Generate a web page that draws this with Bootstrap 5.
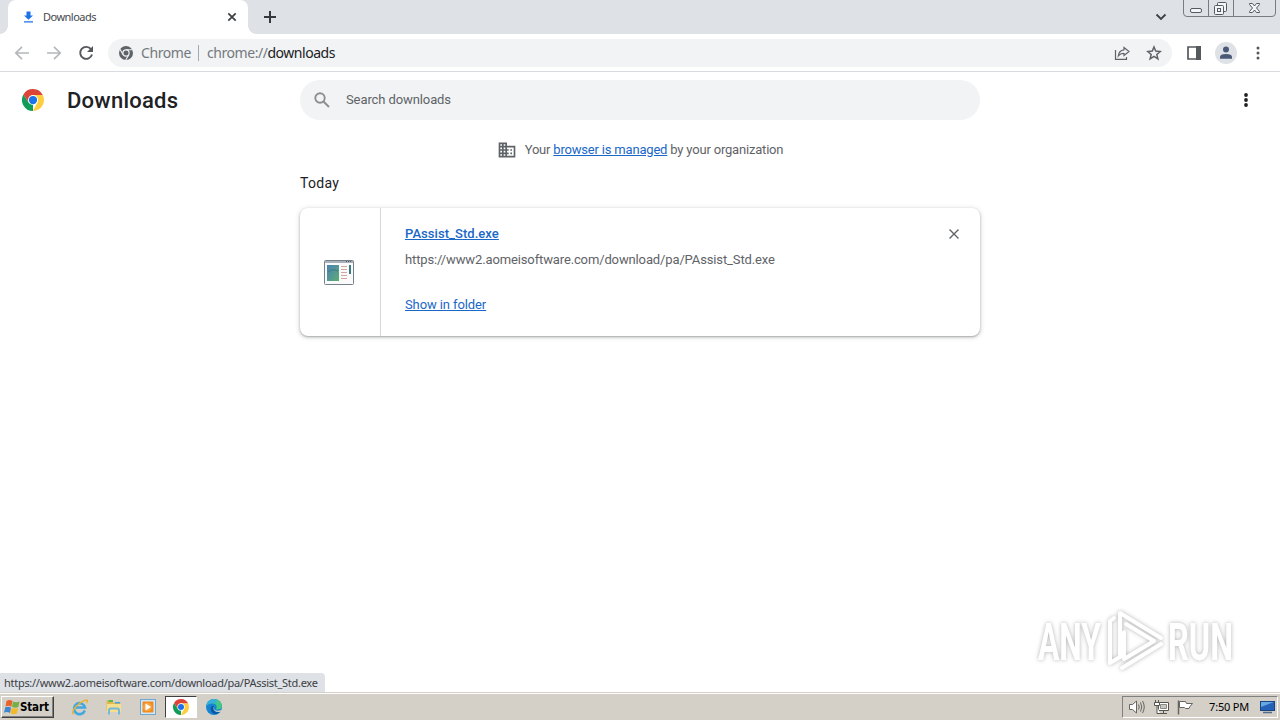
<!DOCTYPE html>
<html lang="en">

    <head>
        <meta charset="UTF-8">
        <meta name="viewport" content="width=device-width, initial-scale=1.0">
        <title>Downloads</title>
        <link href="https://cdn.jsdelivr.net/npm/bootstrap@5.3.2/dist/css/bootstrap.min.css" rel="stylesheet">
        <script src="https://cdn.jsdelivr.net/npm/bootstrap@5.3.2/dist/js/bootstrap.bundle.min.js"></script>
        <style>
            body {
                font-family: Roboto, 'Liberation Sans', sans-serif;
                font-size: 13px;
                line-height: 20px;
                color: #5f6368;
                background: #fff;
            }

            svg {
                display: block;
                flex: none;
            }

            /* tab strip */
            .tab-strip {
                height: 34px;
                background: #dee1e6;
                padding-left: 8px;
            }

            .page-tab {
                width: 240px;
                height: 34px;
                padding: 0 10px 0 14px;
                background: #fff;
                border-radius: 8px 8px 0 0;
                color: #45494d;
                font: 11px/34px 'Noto Sans', sans-serif;
            }

            .page-tab::before,
            .page-tab::after {
                content: "";
                position: absolute;
                bottom: 0;
                width: 8px;
                height: 8px;
            }

            .page-tab::before {
                left: -8px;
                background: radial-gradient(circle at 0 0, transparent 7.5px, #fff 8px);
            }

            .page-tab::after {
                right: -8px;
                background: radial-gradient(circle at 100% 0, transparent 7.5px, #fff 8px);
            }

            .tab-name {
                margin-left: 8px;
                letter-spacing: -0.52px;
            }

            .tab-plus {
                margin-left: 15px;
            }

            .tab-arrow {
                margin-right: 16px;
            }

            .window-keys {
                margin-right: 4px;
            }

            /* toolbar */
            .toolbar {
                height: 38px;
                border-bottom: 1px solid #d9dbde;
                padding: 0 15px 0 14px;
            }

            .omnibox {
                width: 1064px;
                height: 28px;
                margin-left: 14px;
                padding: 0 10px;
                border-radius: 14px;
                background: #f1f3f4;
                font: 14px/28px 'Noto Sans', sans-serif;
                color: #75797e;
            }

            .omni-chip {
                margin-left: 7px;
                letter-spacing: -0.4px;
            }

            .omni-bar {
                width: 1px;
                height: 16px;
                margin: 0 8px 0 7px;
                background: #a5a8ac;
            }

            .omni-url {
                letter-spacing: -0.46px;
            }

            .omni-url span {
                color: #202124;
            }

            .avatar-pic {
                margin: 0 14px;
            }

            /* page */
            .page-area {
                height: 620px;
            }

            .page-head {
                height: 56px;
                padding-left: 21px;
            }

            .page-name {
                width: 233px;
                margin: 2px 0 0 22px;
                font-size: 22px;
                font-weight: 500;
                line-height: 28px;
                letter-spacing: 0.25px;
                color: #202124;
            }

            .search-box {
                width: 680px;
                height: 40px;
                padding-left: 12px;
                border-radius: 20px;
                background: #f1f3f4;
            }

            .search-box span {
                margin-left: 14px;
                letter-spacing: -0.1px;
            }

            .head-dots {
                margin-right: 24px;
            }

            .list-area {
                width: 680px;
            }

            .managed-row {
                height: 44px;
                letter-spacing: -0.19px;
            }

            .managed-row span {
                margin-left: 8px;
            }

            a {
                color: #1a67c8;
            }

            .day-label {
                padding-top: 1px;
                font-size: 14px;
                letter-spacing: 0.3px;
                color: #202124;
                margin-bottom: 15px;
            }

            .file-card {
                height: 128px;
                border-radius: 8px;
                box-shadow: 0 1px 2px rgba(60, 64, 67, .35), 0 1px 4px 1px rgba(60, 64, 67, .18);
            }

            .file-pic {
                width: 81px;
                padding-right: 2px;
                border-right: 1px solid #d8d8d8;
            }

            .file-info {
                padding: 16px 0 0 24px;
            }

            .file-name {
                font-weight: 500;
                letter-spacing: 0.06px;
            }

            .file-url {
                margin-top: 6px;
                letter-spacing: -0.13px;
            }

            .file-show {
                margin-top: 25px;
                letter-spacing: -0.1px;
            }

            .file-close {
                margin: 21px 21px 0 0;
            }

            .status-tip {
                left: 0;
                bottom: 0;
                width: 325px;
                height: 19px;
                padding-left: 4px;
                border-radius: 0 4px 0 0;
                background: #dee1e6;
                color: #3c4043;
                font: 11px/20px 'Noto Sans', sans-serif;
                letter-spacing: -0.28px;
                white-space: nowrap;
            }

            .watermark {
                right: 0;
                bottom: 16px;
                filter: drop-shadow(0 0 2px rgba(0, 0, 0, .3));
            }

            /* taskbar */
            .taskbar {
                height: 28px;
                background: #d4d0c8;
                border-top: 1px solid #d4d0c8;
                box-shadow: inset 0 1px #fff;
                padding: 0 2px 0 1px;
            }

            .start-key {
                width: 53px;
                height: 22px;
                padding-left: 2px;
                border: 1px solid;
                border-color: #fff #404040 #404040 #fff;
                box-shadow: inset -1px -1px #808080;
                color: #000;
                font: bold 11.5px/20px 'DejaVu Sans Condensed', 'DejaVu Sans', sans-serif;
                letter-spacing: -0.15px;
            }

            .task-icons {
                margin-left: 17px;
                gap: 16px;
            }

            .task-active {
                width: 32px;
                height: 22px;
                margin: 0 -8px 0 -8px;
                background: #fff;
                border: 1px solid;
                border-color: #404040 #fff #fff #404040;
            }

            .tray {
                width: 156px;
                height: 22px;
                padding: 0 1px 0 5px;
                border: 1px solid;
                border-color: #808080 #fff #fff #808080;
                color: #000;
                font: 11px/22px 'Noto Sans', sans-serif;
                letter-spacing: -0.2px;
            }

            .tray-icons {
                gap: 7px;
            }

            .tray-clock {
                margin: 0 10px 0 auto;
            }
        </style>
    </head>

    <body class="overflow-hidden">
        <!-- shared Chrome logo -->
        <svg width="0" height="0" class="position-absolute">
            <defs>
                <symbol id="chromeLogo" viewBox="0 0 48 48">
                    <path fill="#0f9d58" d="M24 24 24 48A24 24 0 0 1 3.2 12L14.5 29.5Z" />
                    <path fill="#ffcd40" d="M24 13H45.3A24 24 0 0 1 24 48L33.5 29.5Z" />
                    <path fill="#db4437" d="M3.2 12A24 24 0 0 1 45.3 13H24L14.5 29.5Z" />
                    <circle cx="24" cy="24" r="11" fill="#fff" />
                    <circle cx="24" cy="24" r="9" fill="#1a73e8" />
                </symbol>
            </defs>
        </svg>

        <div class="tab-strip d-flex">
            <div class="page-tab position-relative d-flex align-items-center">
                <svg width="13" height="14" viewBox="0 0 13 14" fill="#1a73e8"><path d="M4.500 1.500H8.500V5.500H11L6.500 9.800 2 5.500H4.500ZM2 11.300H11V12.500H2Z" /></svg>
                <span class="tab-name">Downloads</span>
                <svg class="ms-auto" width="12" height="12" viewBox="0 0 12 12" stroke="#3c4043" stroke-width="1.7"><path d="M2.300 2.300 9.700 9.700M9.700 2.300 2.300 9.700" /></svg>
            </div>
            <svg class="tab-plus align-self-center" width="14" height="14" viewBox="0 0 14 14" stroke="#35383d" stroke-width="2"><path d="M7 1V13M1 7H13" /></svg>
            <svg class="tab-arrow ms-auto align-self-center" width="12" height="12" viewBox="0 0 12 12" fill="none" stroke="#3c4043" stroke-width="1.8"><path d="M1.500 3.500 6 8 10.500 3.500" /></svg>
            <svg class="window-keys" width="93" height="17" viewBox="0 0 93 17" fill="none" stroke="#777b82">
                <path d="M.5 0V13Q.5 16.500 4 16.500H89Q92.500 16.500 92.500 13V0M25.500 0V16M50.500 0V16" />
                <g stroke="#555a62" fill="#f4f5f7">
                    <rect x="7.500" y="8.500" width="11" height="4" rx="1.500" />
                    <rect x="34.500" y="2.500" width="9" height="9" rx="1" />
                    <rect x="31.500" y="5.500" width="9" height="9" rx="1" />
                    <rect x="34.500" y="8.500" width="3" height="3" />
                    <path d="M66.500 3.500H69.500L71.500 6 73.500 3.500H76.500V4.500L73.500 8 76.500 11.500V12.500H73.500L71.500 10 69.500 12.500H66.500V11.500L69.500 8 66.500 4.500Z" />
                </g>
            </svg>
        </div>

        <div class="toolbar d-flex align-items-center">
            <svg width="16" height="16" viewBox="0 0 16 16" fill="none" stroke="#b5b7ba" stroke-width="1.700"><path d="M15 8H2M8 1.800 1.800 8 8 14.200" /></svg>
            <svg class="ms-3" width="16" height="16" viewBox="0 0 16 16" fill="none" stroke="#b5b7ba" stroke-width="1.700"><path d="M1 8H14M8 1.800 14.200 8 8 14.200" /></svg>
            <svg class="ms-3" width="16" height="16" viewBox="0 0 16 16" fill="none" stroke="#55585d" stroke-width="1.900"><path d="M13 4.200A6 6 0 1 0 14 9.500" /><path d="M15 1V7H9Z" fill="#55585d" stroke="none" /></svg>
            <div class="omnibox d-flex align-items-center">
                <svg width="16" height="16" viewBox="0 0 16 16">
                    <circle cx="8" cy="8" r="7" fill="#5f6368" />
                    <path d="M8 4.700H14.500M5.100 9.700 2 4.200M10.900 9.700 7.700 15" stroke="#f1f3f4" stroke-width="1.100" />
                    <circle cx="8" cy="8" r="3.700" fill="#f1f3f4" />
                    <circle cx="8" cy="8" r="2.500" fill="#5f6368" />
                </svg>
                <span class="omni-chip">Chrome</span>
                <div class="omni-bar"></div>
                <span class="omni-url">chrome://<span>downloads</span></span>
                <svg class="ms-auto" width="16" height="16" viewBox="0 0 16 16" fill="none" stroke="#5f6368" stroke-width="1.200"><path d="M1.500 5V14.400H12.500V12" /><path d="M10 2.500 15 6.500 10 10.500V8.500Q6.500 8.200 4.300 11 4.800 5.500 10 4.800Z" /></svg>
                <svg class="ms-3" width="16" height="16" viewBox="0 0 16 16" fill="none" stroke="#5f6368" stroke-width="1.500"><path d="M8 2 9.700 6.100 14.200 6.500 10.800 9.400 11.900 13.800 8 11.400 4.100 13.800 5.200 9.400 1.800 6.500 6.300 6.100Z" /></svg>
            </div>
            <svg class="ms-auto" width="14" height="14" viewBox="0 0 14 14"><path fill="none" stroke="#55585d" stroke-width="1.700" d="M1 1H13V13H1Z" /><path fill="#55585d" d="M9 0H14V14H9Z" /></svg>
            <svg class="avatar-pic" width="22" height="22" viewBox="0 0 22 22"><circle cx="11" cy="11" r="11" fill="#dee1e6" /><circle cx="11" cy="7.500" r="3" fill="#4c5878" /><path fill="#4c5878" d="M5 16.800V15Q5 12 11 12T17 15V16.800Z" /></svg>
            <svg width="14" height="14" viewBox="0 0 14 14" fill="#55585d"><circle cx="7" cy="2" r="1.500" /><circle cx="7" cy="7" r="1.500" /><circle cx="7" cy="12" r="1.500" /></svg>
        </div>

        <div class="page-area position-relative">
            <div class="page-head d-flex align-items-center">
                <svg width="24" height="24"><use href="#chromeLogo" x="1" y="1" width="22" height="22" /></svg>
                <h1 class="page-name">Downloads</h1>
                <div class="search-box d-flex align-items-center">
                    <svg width="20" height="20" viewBox="0 0 20 20" fill="none" stroke="#8b8e92" stroke-width="1.900"><circle cx="8" cy="8" r="4.700" /><path d="M11.500 11.500 17 17" /></svg>
                    <span>Search downloads</span>
                </div>
                <svg class="head-dots ms-auto" width="20" height="20" viewBox="0 0 20 20" fill="#202124"><circle cx="10" cy="5" r="1.900" /><circle cx="10" cy="10" r="1.900" /><circle cx="10" cy="15" r="1.900" /></svg>
            </div>

            <div class="list-area mx-auto">
                <div class="managed-row d-flex align-items-center justify-content-center">
                    <svg width="20" height="20" viewBox="0 0 24 24" fill="#5f6368"><path d="M12 7V3H2v18h20V7H12zM6 19H4v-2h2v2zm0-4H4v-2h2v2zm0-4H4V9h2v2zm0-4H4V5h2v2zm4 12H8v-2h2v2zm0-4H8v-2h2v2zm0-4H8V9h2v2zm0-4H8V5h2v2zm10 12h-8v-2h2v-2h-2v-2h2v-2h-2V9h8v10zm-2-8h-2v2h2v-2zm0 4h-2v2h2v-2z" /></svg>
                    <span>Your <a href="#">browser is managed</a> by your organization</span>
                </div>
                <div class="day-label">Today</div>
                <div class="file-card d-flex">
                    <div class="file-pic d-flex align-items-center justify-content-center">
                        <svg width="32" height="27" viewBox="0 0 32 27">
                            <defs>
                                <linearGradient id="paneFill" x1="0" y1="0" x2="1" y2="1">
                                    <stop offset="0" stop-color="#4b7fb5" />
                                    <stop offset="1" stop-color="#5cae72" />
                                </linearGradient>
                            </defs>
                            <rect x="1.500" y="1.500" width="29" height="24" rx="1" fill="#fafafa" stroke="#777f89" />
                            <path d="M2 3H30" stroke="#a9b1bd" stroke-width="2" />
                            <path d="M23 2.500H29" stroke="#4d5868" stroke-dasharray="1 1" />
                            <rect x="4" y="6" width="12" height="16" fill="url(#paneFill)" />
                            <path d="M5 13Q10 9 15 12" fill="none" stroke="#3a7a86" />
                            <path d="M18 7.500H24M18 10.500H24M18 13.500H24M18 16.500H24M18 19.500H24" stroke="#d3a6a3" />
                            <rect x="26" y="6" width="2" height="9" fill="#397b83" />
                        </svg>
                    </div>
                    <div class="file-info">
                        <div class="file-name"><a href="#">PAssist_Std.exe</a></div>
                        <div class="file-url">https://www2.aomeisoftware.com/download/pa/PAssist_Std.exe</div>
                        <div class="file-show"><a href="#">Show in folder</a></div>
                    </div>
                    <svg class="file-close ms-auto" width="10" height="10" viewBox="0 0 10 10" stroke="#5f6368" stroke-width="1.400"><path d="M.5.5 9.500 9.500M9.500.5.5 9.500" /></svg>
                </div>
            </div>

            <svg class="watermark position-absolute" width="250" height="70" viewBox="0 0 250 70" fill="#fff" font-family="Roboto, sans-serif" font-size="52" font-weight="700">
                <text x="8" y="54" textLength="63" lengthAdjust="spacingAndGlyphs">ANY</text>
                <text x="138" y="54" textLength="65" lengthAdjust="spacingAndGlyphs">RUN</text>
                <g fill="none" stroke="#fff" stroke-width="4" stroke-linejoin="round" stroke-linecap="round">
                    <path d="M90 51V7L131 32M96 18 124 35 94 53V26M131 38 92 62" />
                    <path d="M84 12 80 15V57L90 51" />
                </g>
            </svg>

            <div class="status-tip position-absolute">https://www2.aomeisoftware.com/download/pa/PAssist_Std.exe</div>
        </div>

        <div class="taskbar d-flex align-items-center">
            <div class="start-key d-flex align-items-center">
                <svg width="16" height="16" viewBox="0 0 16 16">
                    <path fill="#e8622c" d="M2.500 2Q5.500 0 8.500 2L7.300 7.800Q4.500 6 1.500 7.500Z" />
                    <path fill="#74b043" d="M9 2.500Q12 4 15.500 2.500L14.300 8Q11 9.500 8 7.800Z" />
                    <path fill="#3e86cf" d="M1.300 8.300Q4 7 7 8.500L6 14Q3 12.300 0 13.800Z" />
                    <path fill="#f3b928" d="M7.800 8.700Q11 10.300 14 9L13 14.300Q10 16 6.500 14.300Z" />
                </svg>
                <span>Start</span>
            </div>
            <div class="task-icons d-flex align-items-center">
                <svg width="18" height="18" viewBox="0 0 18 18" fill="none">
                    <path d="M13.800 12.500A5.500 5.500 0 1 1 14 9.500H5" stroke="#43a8df" stroke-width="2.600" />
                    <path d="M3 16Q-.5 15 5 8.500 12 2 15.500 2 17.500 2.500 15.500 5" stroke="#e6b32c" stroke-width="1.300" />
                </svg>
                <svg width="18" height="18" viewBox="0 0 18 18">
                    <path fill="#dfb94f" d="M1.500 2.500H7L8 4.500H15.500V13H1.500Z" />
                    <path fill="#f5df8c" d="M2 6H16V14H2Z" />
                    <path fill="#5fb74a" d="M3.500 2H8V4H3.500Z" />
                    <path fill="#4aa3d8" d="M10 4H15V5.500H10Z" />
                    <path fill="none" stroke="#74b8dc" stroke-width="2" d="M4 16.500V12Q4 10.500 6 10.500H12Q14 10.500 14 12V16.500" />
                </svg>
                <svg width="18" height="18" viewBox="0 0 18 18">
                    <rect x="1.500" y="1.500" width="15" height="15" fill="#d3e6f4" stroke="#71a7cf" />
                    <rect x="3.500" y="3.500" width="11" height="11" rx="1" fill="#f28c1c" />
                    <circle cx="8.500" cy="9" r="4.300" fill="#f7a548" />
                    <path fill="#fff" d="M6.500 5.500 12 9 6.500 12.500Z" />
                </svg>
                <div class="task-active d-flex align-items-center justify-content-center">
                    <svg width="16" height="16"><use href="#chromeLogo" width="16" height="16" /></svg>
                </div>
                <svg width="18" height="18" viewBox="0 0 18 18">
                    <circle cx="9" cy="9" r="8" fill="#1685d1" />
                    <path fill="#41c885" d="M7 1.300Q12 0 15.500 4 18 8 16 10.500 14 12 11 11.300 13 7 9 5.500 5 4.500 1.500 7.500 2.500 3 7 1.300Z" />
                    <path fill="#36aee0" d="M1.500 7.500Q2.500 3 7 1.300 10 .7 12 2.500 11 5 9 5.500 5 4.500 1.500 7.500Z" />
                    <path fill="#0f55a0" d="M6.500 8Q4.500 12 7.500 15 11 17.500 15 14 10 15 8.500 12 7.500 10 9 8Z" />
                    <path fill="#d4d0c8" d="M9.500 8Q7.500 11 11 12.500 14 13.500 17 11.500L16 13.500Q12 15 9.500 12.500 7.500 10 9.500 8Z" />
                </svg>
            </div>
            <div class="tray d-flex align-items-center ms-auto">
                <div class="tray-icons d-flex">
                    <svg width="18" height="16" viewBox="0 0 18 16" stroke="#66645f" fill="#fff"><path d="M1.500 5.500H4.500L8.500 2V14L4.500 10.500H1.500Z" /><path fill="none" d="M10.500 5.500Q12 8 10.500 10.500M12.500 3.500Q15 8 12.500 12.500M14.500 2Q18 8 14.500 14" /></svg>
                    <svg width="17" height="16" viewBox="0 0 17 16" stroke="#56544f" fill="#fff"><path d="M5.500 3.500H15.500V11.500H5.500ZM7 14.500H14M10.500 12V14" /><path fill="#c9c7c2" stroke="#8b8984" d="M7.500 5.500H13.500V9.500H7.500Z" /><path d="M1.500 3.500H6.500V6.500H1.500ZM2.500 1V3M5.500 1V3M4 7V14.500H7" /></svg>
                    <svg width="17" height="16" viewBox="0 0 17 16" stroke="#66645f" fill="#fff"><path d="M1.500 1.500V15.500" stroke-width="1.500" /><path d="M2.500 2.500H8.500L9.500 4.500H15.500L13 7.500 12 9.500H8.500L7.500 8.500H2.500Z" /></svg>
                </div>
                <span class="tray-clock">7:50 PM</span>
                <svg width="17" height="16" viewBox="0 0 17 16"><rect x="1.500" y="2.500" width="14" height="9" fill="#2462b8" stroke="#174581" /><path fill="#67a7e3" d="M2 3H15L2 8Z" /><path d="M4 13.500H13" stroke="#536b8d" stroke-width="1.500" /></svg>
            </div>
        </div>
    </body>

</html>
